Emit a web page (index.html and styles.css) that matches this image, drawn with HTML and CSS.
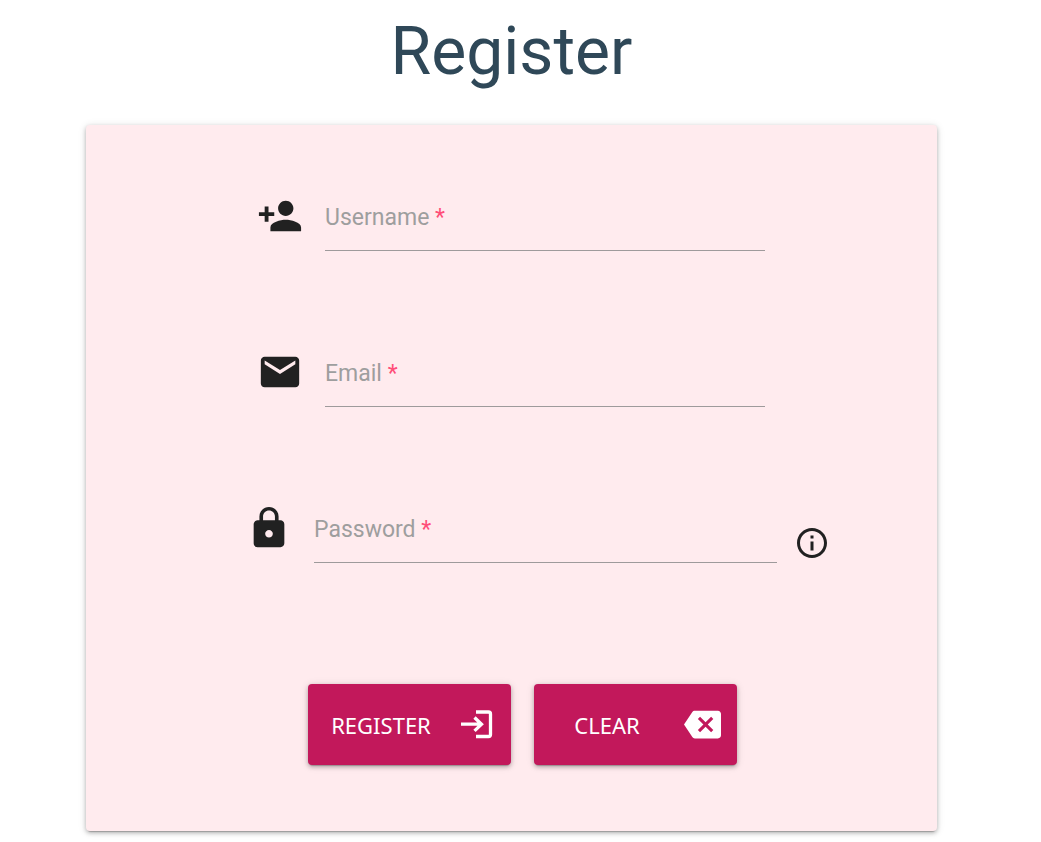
FILE: index.html
```html
<!DOCTYPE html>
<html lang="en">
<head>
<meta charset="utf-8">
<meta name="viewport" content="width=device-width, initial-scale=1">
<title>Register</title>
<link rel="stylesheet" href="styles.css">
</head>
<body>
<main class="page">
  <h1 class="title">Register</h1>
  <form class="card">
    <div class="row">
      <svg class="icon" viewBox="0 0 24 24" aria-hidden="true"><path d="M15 12c2.210 0 4-1.790 4-4s-1.790-4-4-4-4 1.790-4 4 1.790 4 4 4zm-9-2V7H4v3H1v2h3v3h2v-3h3v-2H6zm9 4c-2.670 0-8 1.340-8 4v2h16v-2c0-2.660-5.330-4-8-4z"/></svg>
      <div class="field">
        <input class="input" id="username" type="text" required>
        <label class="label" for="username">Username <span class="star">*</span></label>
      </div>
    </div>
    <div class="row">
      <svg class="icon" viewBox="0 0 24 24" aria-hidden="true"><path d="M20 4H4c-1.100 0-1.990.9-1.990 2L2 18c0 1.100.9 2 2 2h16c1.100 0 2-.9 2-2V6c0-1.100-.9-2-2-2zm0 4l-8 5-8-5V6l8 5 8-5v2z"/></svg>
      <div class="field">
        <input class="input" id="email" type="email" required>
        <label class="label" for="email">Email <span class="star">*</span></label>
      </div>
    </div>
    <div class="row row-wide">
      <svg class="icon" viewBox="0 0 24 24" aria-hidden="true"><path d="M18 8h-1V6c0-2.760-2.240-5-5-5S7 3.240 7 6v2H6c-1.100 0-2 .9-2 2v10c0 1.100.9 2 2 2h12c1.100 0 2-.9 2-2V10c0-1.100-.9-2-2-2zm-6 9c-1.100 0-2-.9-2-2s.9-2 2-2 2 .9 2 2-.9 2-2 2zm3.100-9H8.900V6c0-1.710 1.390-3.100 3.100-3.100s3.100 1.390 3.100 3.100v2z"/></svg>
      <div class="field">
        <input class="input" id="password" type="password" required>
        <label class="label" for="password">Password <span class="star">*</span></label>
      </div>
      <svg class="info" viewBox="0 0 24 24" role="img" aria-label="Password help"><path d="M11 7h2v2h-2zm0 4h2v6h-2zm1-9C6.480 2 2 6.480 2 12s4.480 10 10 10 10-4.480 10-10S17.520 2 12 2zm0 18c-4.410 0-8-3.590-8-8s3.590-8 8-8 8 3.590 8 8-3.590 8-8 8z"/></svg>
    </div>
    <div class="actions">
      <button class="button" type="submit">
        <span class="caption">REGISTER</span>
        <svg class="glyph" viewBox="0 0 37 37" aria-hidden="true"><path d="M18 6h12.500q2 0 2 2v20.500q0 2-2 2H18M3 18.200h21M16.500 11.500l7 6.700-7 6.700" fill="none" stroke="currentColor" stroke-width="3.300"/></svg>
      </button>
      <button class="button" type="reset">
        <span class="caption">CLEAR</span>
        <svg class="glyph" viewBox="0 0 24 24" aria-hidden="true"><path fill="currentColor" d="M22 3H7c-.69 0-1.230.35-1.590.88L0 12l5.410 8.110c.36.53.9.89 1.590.89h15c1.100 0 2-.9 2-2V5c0-1.100-.9-2-2-2zm-3 12.590L17.590 17 14 13.410 10.410 17 9 15.590 12.590 12 9 8.410 10.410 7 14 10.590 17.590 7 19 8.410 15.410 12 19 15.590z"/></svg>
      </button>
    </div>
  </form>
</main>
</body>
</html>
```
FILE: styles.css
```css
* {
  box-sizing: border-box;
}

body {
  margin: 0;
  background: #fff;
  font-family: Roboto, "Liberation Sans", sans-serif;
}

.page {
  padding: 13px 104px 10px 86px;
}

.title {
  margin: 0 0 34px;
  color: #2f4858;
  font-size: 66px;
  font-weight: 400;
  line-height: 78px;
  text-align: center;
}

.card {
  padding: 56px 107px 66px 160px;
  border-radius: 4px;
  background: #ffebee;
  box-shadow: 0 3px 1px -2px rgba(0, 0, 0, .2), 0 2px 4px rgba(0, 0, 0, .24), 0 1px 8px rgba(0, 0, 0, .12);
}

.row {
  display: flex;
  align-items: center;
  gap: 22px;
  margin-bottom: 86px;
  padding: 0 65px 0 11px;
}

.row-wide {
  padding: 0;
}

.icon {
  flex: none;
  width: 46px;
  height: 46px;
  fill: #212121;
}

.info {
  flex: none;
  align-self: flex-end;
  width: 36px;
  height: 36px;
  margin: 0 0 2px -5px;
  fill: #212121;
}

.field {
  position: relative;
  flex: 1;
  min-width: 0;
}

.input {
  display: block;
  width: 100%;
  height: 70px;
  padding: 0;
  border: 0;
  border-bottom: 1px solid #9e9a9b;
  border-radius: 0;
  outline: 0;
  background: transparent;
  color: #212121;
  font: 23px/27px Roboto, "Liberation Sans", sans-serif;
}

.label {
  position: absolute;
  top: 23px;
  left: 0;
  color: #9e9e9e;
  font-size: 23px;
  line-height: 27px;
  pointer-events: none;
}

.input:focus + .label,
.input:valid + .label {
  top: 0;
  font-size: 16px;
}

.star {
  color: #ff4d78;
}

.actions {
  display: flex;
  gap: 23px;
  margin: 121px 0 0 62px;
}

.button {
  display: flex;
  align-items: center;
  gap: 4px;
  height: 81px;
  padding: 0 16px 0 0;
  border: 0;
  border-radius: 4px;
  background: #c2185b;
  box-shadow: 0 3px 1px -2px rgba(0, 0, 0, .2), 0 2px 4px rgba(0, 0, 0, .24), 0 1px 8px rgba(0, 0, 0, .12);
  color: #fff;
  cursor: pointer;
}

.caption {
  width: 146px;
  font: 22px/30px "Noto Sans", "Open Sans", sans-serif;
  text-align: center;
}

.glyph {
  flex: none;
  width: 37px;
  height: 37px;
}
```
